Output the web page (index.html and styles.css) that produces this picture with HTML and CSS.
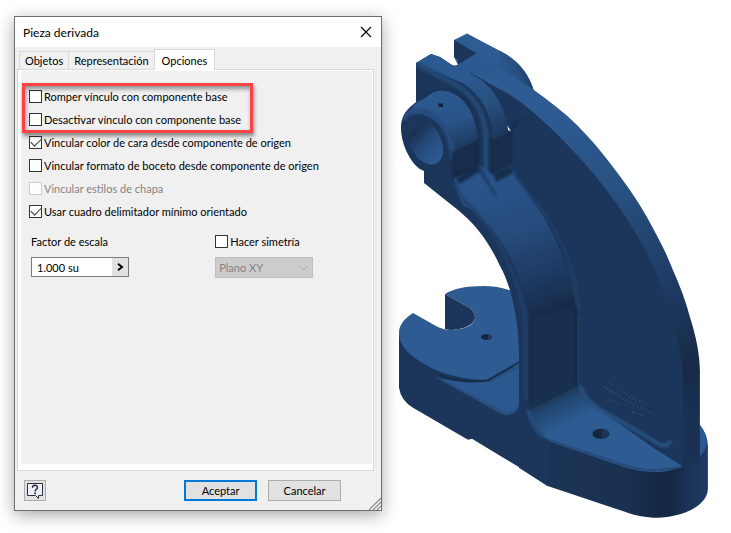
FILE: index.html
```
<!DOCTYPE html>
<html lang="es">

<head>
  <meta charset="UTF-8">
  <meta name="viewport" content="width=device-width, initial-scale=1.0">
  <title>Pieza derivada</title>
  <link rel="stylesheet" href="styles.css">
</head>

<body>
  <!-- Cuadro de diálogo -->
  <form class="dialog">
    <div class="title-bar">
      <h1 class="dialog-title">Pieza derivada</h1>
      <button type="button" class="close-btn" aria-label="Cerrar">
        <svg width="12" height="12" viewBox="0 0 12 12"><path d="M1 1l10 10M11 1L1 11" stroke="#000" stroke-width="1.1" /></svg>
      </button>
    </div>

    <div class="dialog-body">
      <!-- Pestañas -->
      <div class="tabs" role="tablist">
        <button type="button" class="tab" role="tab">Objetos</button>
        <button type="button" class="tab" role="tab">Representación</button>
        <button type="button" class="tab tab-active" role="tab" aria-selected="true">Opciones</button>
      </div>

      <div class="panel">
        <div class="options">
          <!-- Opciones resaltadas -->
          <div class="options-marked">
            <label class="option"><input type="checkbox" class="check">Romper vínculo con componente base</label>
            <label class="option"><input type="checkbox" class="check">Desactivar vínculo con componente base</label>
            <span class="highlight"></span>
          </div>
          <label class="option"><input type="checkbox" class="check" checked>Vincular color de cara desde componente de origen</label>
          <label class="option"><input type="checkbox" class="check">Vincular formato de boceto desde componente de origen</label>
          <label class="option option-off"><input type="checkbox" class="check" disabled>Vincular estilos de chapa</label>
          <label class="option"><input type="checkbox" class="check" checked>Usar cuadro delimitador mínimo orientado</label>
        </div>

        <!-- Escala y simetría -->
        <div class="fields">
          <div class="field">
            <label class="field-label" for="scale">Factor de escala</label>
            <div class="spin">
              <input type="text" class="spin-input" id="scale" value="1.000 su">
              <button type="button" class="spin-btn" aria-label="Más valores">
                <svg width="7" height="8" viewBox="0 0 7 8"><path d="M1 .8L5 4 1 7.2" fill="none" stroke="#000" stroke-width="2" /></svg>
              </button>
            </div>
          </div>
          <div class="field">
            <label class="option"><input type="checkbox" class="check">Hacer simetría</label>
            <div class="select-wrap">
              <select class="select" aria-label="Plano de simetría" disabled>
                <option>Plano XY</option>
              </select>
              <svg class="select-arrow" width="9" height="6" viewBox="0 0 9 6"><path d="M.5 .8l4 4 4-4" fill="none" stroke="#a0a0a0" /></svg>
            </div>
          </div>
        </div>
      </div>

      <!-- Botones inferiores -->
      <div class="footer">
        <button type="button" class="help-btn" aria-label="Ayuda">
          <svg width="18" height="18" viewBox="0 0 18 18">
            <path d="M1.500 1.500h15v12h-4v3l-3-3h-8z" fill="#eef0f8" stroke="#2c2e40" />
            <path d="M6.500 5.800c0-3.400 5-3.200 5-.4 0 1.900-2.400 1.900-2.400 4" fill="none" stroke="#2c2e40" stroke-width="1.500" />
            <path d="M8.200 10.600h1.800v1.600H8.200z" fill="#2c2e40" />
          </svg>
        </button>
        <button type="submit" class="btn btn-default">Aceptar</button>
        <button type="button" class="btn">Cancelar</button>
      </div>
    </div>

    <svg class="grip" width="12" height="12" viewBox="0 0 12 12">
      <path d="M0 12L12 0M4 12l8-8M8 12l4-4" stroke="#8c8c8c" stroke-width="1.300" />
      <path d="M2 12L12 2M6 12l6-6M10 12l2-2" stroke="#fff" stroke-width="1" />
    </svg>
  </form>

  <!-- Modelo 3D de la pieza -->
  <svg class="model" viewBox="398 32 313 488" role="img" aria-label="Pieza">
    <defs>
      <linearGradient id="arc" gradientUnits="userSpaceOnUse" x1="560" y1="110" x2="690" y2="370">
        <stop offset="0" stop-color="#2d5b92" />
        <stop offset=".35" stop-color="#28507f" />
        <stop offset=".7" stop-color="#1e3b63" />
        <stop offset="1" stop-color="#172a47" />
      </linearGradient>
      <linearGradient id="web" gradientUnits="userSpaceOnUse" x1="490" y1="185" x2="545" y2="330">
        <stop offset="0" stop-color="#2a5389" />
        <stop offset=".35" stop-color="#264b7c" />
        <stop offset=".7" stop-color="#1c385f" />
        <stop offset=".9" stop-color="#172c4a" />
        <stop offset="1" stop-color="#183050" />
      </linearGradient>
      <linearGradient id="cyl" gradientUnits="userSpaceOnUse" x1="445" y1="90" x2="470" y2="158">
        <stop offset="0" stop-color="#2c5990" />
        <stop offset=".45" stop-color="#2a5489" />
        <stop offset="1" stop-color="#182d4c" />
      </linearGradient>
      <linearGradient id="shoulder" gradientUnits="userSpaceOnUse" x1="475" y1="75" x2="505" y2="148">
        <stop offset="0" stop-color="#2c5990" />
        <stop offset=".4" stop-color="#27507f" />
        <stop offset="1" stop-color="#182d4c" />
      </linearGradient>
      <linearGradient id="lobe" gradientUnits="userSpaceOnUse" x1="505" y1="80" x2="532" y2="68">
        <stop offset="0" stop-color="#2c5990" />
        <stop offset=".5" stop-color="#274f81" />
        <stop offset="1" stop-color="#1a3253" />
      </linearGradient>
      <linearGradient id="bore" gradientUnits="userSpaceOnUse" x1="418" y1="122" x2="432" y2="164">
        <stop offset="0" stop-color="#1d385e" />
        <stop offset=".15" stop-color="#1a3052" />
        <stop offset=".55" stop-color="#264c7e" />
        <stop offset="1" stop-color="#2d5b92" />
      </linearGradient>
      <linearGradient id="ramp" gradientUnits="userSpaceOnUse" x1="548" y1="392" x2="565" y2="426">
        <stop offset="0" stop-color="#182e4d" />
        <stop offset=".45" stop-color="#234772" />
        <stop offset="1" stop-color="#2d5b92" />
      </linearGradient>
      <linearGradient id="base" gradientUnits="userSpaceOnUse" x1="540" y1="0" x2="709" y2="0">
        <stop offset="0" stop-color="#1b3356" />
        <stop offset=".5" stop-color="#1a3152" />
        <stop offset=".76" stop-color="#142640" />
        <stop offset=".9" stop-color="#1b355a" />
        <stop offset="1" stop-color="#1e3b66" />
      </linearGradient>
      <linearGradient id="post" gradientUnits="userSpaceOnUse" x1="0" y1="370" x2="0" y2="420">
        <stop offset="0" stop-color="#172a47" />
        <stop offset="1" stop-color="#1a3153" />
      </linearGradient>
      <linearGradient id="postFoot" gradientUnits="userSpaceOnUse" x1="0" y1="455" x2="0" y2="475">
        <stop offset="0" stop-color="#1a3153" />
        <stop offset="1" stop-color="#1a3153" stop-opacity="0" />
      </linearGradient>
      <filter id="soft" x="-20%" y="-20%" width="140%" height="140%">
        <feGaussianBlur stdDeviation="1.300" />
      </filter>
      <clipPath id="boreClip"><ellipse cx="425.500" cy="142" rx="15.500" ry="24" transform="rotate(-27 425.500 142)" /></clipPath>
      <clipPath id="bodyClip">
        <path d="M416 63L431 54 440 57 452 65Q455 67 459 64L477 53 512 80 555 110 600 170 690 330 690 470 560 490 519 470V350Q518 315 510 293C500 262 485 235 458 210L424 183V171C412 167 401 145 401 128 401 112 412 106 416 102Z" />
      </clipPath>
    </defs>

    <!-- Base izquierda -->
    <path d="M399 333V388Q401 401 413 408L468 440 472 439 547 484V370H519L445 330 413 318Z" fill="#1c365b" />
    <path d="M413 313L436 326Q442 330 453 330 474 328 475 318 475 312 470 308L445 294Q458 286 483 286 499 286 512 291L520 330V362L488 380Q462 380 438 371C414 360 399 348 399 333 399 325 404 319 413 313Z" fill="#2d5b92" />
    <path d="M445 294L470 308Q475 312 475 318C474 326 460 330 450 330L445 329Z" fill="#1c365b" />
    <path d="M435 377Q462 384 490 380L520 363V404Q517 417 504 415Q499 414 492 409Z" fill="#28507f" />
    <path d="M442 379Q466 385 490 382L520 367V402Q517 413 505 412Z" fill="#2c5890" />
    <path d="M438 375Q462 384 488 380.500L520 362" fill="none" stroke="#172b49" stroke-width="2" />
    <ellipse cx="486.500" cy="337" rx="5.500" ry="3" fill="#15263f" />
    <path d="M488 334.500h2l2 2.500-2 2.500h-2z" fill="#1f3d66" />

    <!-- Base derecha -->
    <path d="M699 424Q708 435 708 446V490C706 508 680 518 653 518 642 517 632 515 625 512L547 486 540 478 525 470V400L640 440Z" fill="url(#base)" />
    <path d="M699 424Q707 433 707 443 706 451 699 458Z" fill="#2c5990" />
    <path d="M527 409L579 383Q582 398 597 408L653 440 683 466Q671 473 653 472 640 472 627 468L550 442Q535 432 527 409Z" fill="url(#ramp)" />
    <path d="M540 431Q543 439 552 441L627 466Q652 474 681 467" fill="none" stroke="#254a79" stroke-width="2" />
    <ellipse cx="601" cy="434" rx="8.500" ry="5" fill="#15263f" />
    <path d="M602 429.500q7 .5 7.500 4.500-1 4-7.500 5z" fill="#1c365b" />

    <!-- Lóbulo trasero -->
    <path d="M454 40L467 33.500 504 53Q527 66 534 91L540 115 480 100 458 65 454 57Z" fill="#2d5b92" />
    <path d="M500 51Q525 64 534 91L499 70Z" fill="url(#lobe)" />
    <path d="M454 40L477 53.500 458 65V60L454 57Z" fill="#1c365b" />

    <!-- Canto exterior del nervio -->
    <path d="M496 67Q518 79 534 90C549 101 564 112 577 125 589 137 600 150 610 163 624 181 637 199 647 217 657 235 666 252 673 270 680 286 686 301 690 317 696 336 700 354 700 372H670L560 200 470 73Z" fill="url(#arc)" />
    <path d="M680 371H700V458H680Z" fill="url(#post)" />
    <path d="M683 455H700V475H683Z" fill="url(#postFoot)" />

    <!-- Cara plana del nervio -->
    <path d="M470 73L507 93Q520 101 533 112C555 131 575 152 593 173 613 197 633 226 647 253 660 282 670 308 677 337Q683 362 683 383V466L655 449 597 408Q579 397 579 383V330C578 260 535 205 511 170V130Z" fill="#1c365b" />

    <!-- Alma curva y cubo delantero -->
    <path d="M416 63L431 54 440 57 452 65Q455 67 459 64L477 53 490 66 471 73C490 83 504 103 508 130L512 132V165Q516 180 526 190C560 230 579 278 579 325V386L527 411 542 438 550 444 547 486 519 468V350C518 315 510 283 500 266 488 240 475 224 458 210L424 183V171C412 167 401 145 401 128 401 112 412 106 416 102Z" fill="#1c365b" />
    <path d="M416 63L431 54 440 57 452 65Q455 67 459 64L477 53 500 67 484 76 471 73C489 83 505 102 508 130L492 141V128C488 106 477 92 462 83Z" fill="url(#shoulder)" />
    <g clip-path="url(#bodyClip)">
      <path d="M417 64L456 85C474 95 485 115 486 137V171Q491 178 497 190" fill="none" stroke="#244875" stroke-width="5" filter="url(#soft)" />
      <path d="M424 104L429 95C440 86 458 91 468 104Q479 120 480 139V165" fill="none" stroke="#1a3153" stroke-width="3" filter="url(#soft)" />
      <path d="M454 178L479 165 492 174 511 165Q515 180 525 190C558 232 575 280 577 326L532 352C531 270 492 220 463 205Q455 192 454 178Z" fill="url(#web)" />
      <path d="M455 178L478 165 482 170 460 184ZM493 173L511 165 514 173 496 182Z" fill="#182e4e" filter="url(#soft)" />
      <path d="M530 318L577 306V386L530 410Z" fill="#182f50" />
    </g>

    <!-- Cilindro del cubo -->
    <path d="M405 116L417 102Q425 99 429 95C442 85 458 94 466 104Q476 117 478 140L453 152C448 128 430 107 405 116Z" fill="url(#cyl)" />
    <g clip-path="url(#bodyClip)">
      <path d="M403 120C411 106 430 109 441 123Q452 137 453 160" fill="none" stroke="#264b7d" stroke-width="5" filter="url(#soft)" />
    </g>
    <ellipse cx="425.500" cy="142" rx="15.500" ry="24" transform="rotate(-27 425.500 142)" fill="url(#bore)" />
    <path d="M409 128Q422 128 432 120" stroke="#1c365b" stroke-width="3" fill="none" clip-path="url(#boreClip)" />
    <path d="M438 103.500h5v3.500h-4z" fill="#12213a" />

    <!-- Resaltes y redondeos -->
    <path d="M454 152L477 140V167L454 178Z" fill="#182e4e" />
    <path d="M492 140L510 132V165L492 174Z" fill="#182e4e" />
    <g fill="none" filter="url(#soft)">
      <path d="M453 150V176L463 171M477 139V166L467 171M491 138V173" stroke="#142743" stroke-width="2" />
      <path d="M455 181Q458 195 466 203C495 228 520 275 526 325V400" stroke="#204069" stroke-width="3" />
      <path d="M530 322V403M576 305V384" stroke="#15273f" stroke-width="2" />
      <path d="M513 169Q516 180 527 191C560 230 576 272 579 310" stroke="#22436f" stroke-width="2" />
      <path d="M511 164V134Q512 124 520 121" stroke="#152944" stroke-width="2" />
      <path d="M580 386Q584 399 599 409L654 441Q665 450 671 441" stroke="#28517f" stroke-width="4" />
      <path d="M528 410Q533 430 544 437" stroke="#254b7a" stroke-width="4" />
      <path d="M479 168L496 196" stroke="#1f3e68" stroke-width="3" />
    </g>
    <path d="M514 121q4-3 12-1" fill="none" stroke="#182d4b" />
    <path d="M471 73l4 3 8 4" stroke="#15263f" fill="none" stroke-dasharray="2 2" />
    <path d="M653 447l30 19" stroke="#1b3455" fill="none" />

    <!-- Grabado en relieve -->
    <g fill="none" stroke="#2d5b92">
      <path d="M599 384l22 14 32 16" stroke-dasharray="1 3" />
      <path d="M608 383l24 14 18 9" stroke-dasharray="1 2 2 4" />
      <path d="M604 387l14 8m10 3l8 4m-27-2l12 6m11 6l12 4" stroke-dasharray="2 2 1 3" />
    </g>
    <path d="M610 385l10 4m2 6l14 8m-19 2l10 4m8 6l9 3m-1-15l10 8" fill="none" stroke="#14253e" stroke-dasharray="2 2" />
  </svg>
</body>

</html>
```

FILE: styles.css
```
* {
  margin: 0;
  padding: 0;
  box-sizing: border-box;
}

body {
  display: grid;
  grid-template-columns: 20fr 17fr;
  gap: 16px;
  min-height: 100vh;
  padding: 16px 20px 0 14px;
  background: #fff;
  color: #000;
  font-family: Lato, "DejaVu Sans Condensed", sans-serif;
  font-size: 11px;
}

button,
input,
select {
  font: inherit;
  color: inherit;
}

/* Ventana */
.dialog {
  position: relative;
  display: flex;
  flex-direction: column;
  margin-bottom: 22px;
  border: 1px solid #6e6e6e;
  background: #f0f0f0;
  box-shadow: 0 4px 16px rgba(0, 0, 0, 0.35);
}

.title-bar {
  display: flex;
  justify-content: space-between;
  align-items: center;
  height: 30px;
  padding: 0 7px 0 8px;
  background: #fff;
}

.dialog-title {
  font-size: 12px;
  font-weight: normal;
}

.close-btn {
  display: flex;
  padding: 2px;
  border: none;
  background: none;
}

.dialog-body {
  flex: 1;
  display: flex;
  flex-direction: column;
  padding: 2px 7px 9px 2px;
}

/* Pestañas */
.tabs {
  display: flex;
  align-items: flex-end;
  padding-left: 2px;
}

.tab {
  height: 18px;
  padding: 0 5px;
  border: 1px solid #d9d9d9;
  border-width: 1px 0 0 1px;
  background: #f0f0f0;
}

.tab-active {
  position: relative;
  z-index: 1;
  height: 21px;
  margin-bottom: -1px;
  padding: 0 7px;
  border-right-width: 1px;
  background: #fff;
}

/* Panel de opciones */
.panel {
  flex: 1;
  padding: 20px 0 0 8px;
  border: 1px solid #d9d9d9;
  background: linear-gradient(#f0f0f0, #f0f0f0) no-repeat 3px 1px / calc(100% - 4px) calc(100% - 7px) #fff;
}

.options,
.options-marked {
  display: flex;
  flex-direction: column;
  align-items: flex-start;
  gap: 10px;
}

.options {
  padding-left: 3px;
}

.options-marked {
  position: relative;
}

.highlight {
  position: absolute;
  inset: -7px -12px -7px -7px;
  border: 3px solid #fb4245;
  box-shadow: 1px 3px 4px rgba(0, 0, 0, 0.45), inset 1px 3px 4px rgba(0, 0, 0, 0.4);
  pointer-events: none;
}

.option {
  display: flex;
  align-items: center;
  gap: 2px;
  height: 13px;
  white-space: nowrap;
}

.option-off {
  color: #838383;
}

.check {
  appearance: none;
  width: 13px;
  height: 13px;
  border: 1px solid #333;
  background: #fff;
}

.check:checked::before {
  content: "";
  display: block;
  width: 9px;
  height: 5px;
  margin: 1px;
  border: solid #333;
  border-width: 0 0 1px 1px;
  transform: rotate(-45deg);
}

.check:disabled {
  border-color: #ccc;
}

/* Campos */
.fields {
  display: grid;
  grid-template-columns: 7fr 6fr;
  padding: 17px 0 0 5px;
}

.field {
  display: flex;
  flex-direction: column;
  align-items: flex-start;
  gap: 9px;
}

.field-label {
  height: 13px;
  line-height: 13px;
}

.spin {
  display: flex;
  width: 98px;
  height: 20px;
  border: 1px solid #7a7a7a;
}

.spin-input {
  flex: 1;
  min-width: 0;
  padding-left: 5px;
  border: none;
  background: #fff;
}

.spin-btn {
  display: flex;
  justify-content: center;
  align-items: center;
  width: 16px;
  border: none;
  background: #e1e1e1;
}

.select-wrap {
  position: relative;
}

.select {
  appearance: none;
  width: 98px;
  height: 21px;
  padding-left: 3px;
  border: 1px solid #bfbfbf;
  border-radius: 0;
  background: #ccc;
  color: #838383;
  opacity: 1;
}

.select-arrow {
  position: absolute;
  top: 8px;
  right: 5px;
}

/* Botones */
.footer {
  display: flex;
  align-items: center;
  gap: 11px;
  padding: 9px 33px 0 7px;
}

.btn,
.help-btn {
  height: 21px;
  border: 1px solid #adadad;
  background: #e1e1e1;
}

.btn {
  width: 73px;
}

.btn-default {
  border: 2px solid #0078d7;
}

.help-btn {
  display: flex;
  justify-content: center;
  align-items: center;
  width: 22px;
  margin-right: auto;
}

.grip {
  position: absolute;
  right: 0;
  bottom: 0;
}

/* Modelo */
.model {
  display: block;
  width: 100%;
  margin-top: 16px;
}
```
